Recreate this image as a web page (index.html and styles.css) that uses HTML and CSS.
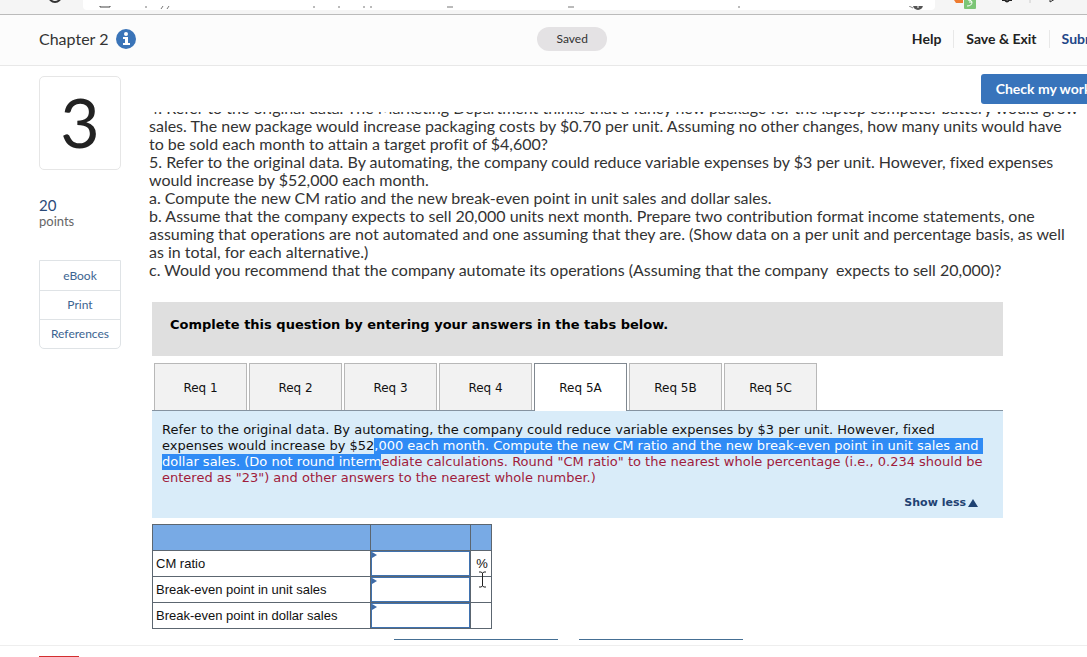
FILE: index.html
```html
<!DOCTYPE html>
<html lang="en">
<head>
    <meta charset="UTF-8">
    <meta name="viewport" content="width=device-width, initial-scale=1.0">
    <title>Chapter 2</title>
    <link rel="stylesheet" href="styles.css">
</head>
<body>
<div class="page">
    <!-- Browser toolbar -->
    <div class="browser-bar">
        <svg class="reload" width="16" height="14" viewBox="0 0 16 14"><path d="M2 -4a6 6 0 0 0 12 0" fill="none" stroke="#333" stroke-width="2"/></svg>
        <div class="address">
            <svg width="852" height="10" viewBox="0 0 852 10" fill="none" stroke="#777" stroke-width="1">
                <path d="M17 0v1h10v-1" stroke="#444"/>
                <path d="M63 0v2M80 0l-2 3M86 0l-2 3M231 0v2M256 0v2M281 0v2M288 0v2M656 0v2M364 1h6M485 1h6"/>
                <path d="M826 0l4 2" stroke="#888"/><circle cx="835" cy="-1" r="5" fill="#555" stroke="none"/><path d="M835 0v2" stroke="#fff"/>
            </svg>
        </div>
        <svg class="extensions" width="152" height="14" viewBox="0 0 152 14">
            <path d="M19 0h9v3h-7z" fill="#ee7b30"/>
            <rect x="29" y="-3" width="12" height="12" rx="1" fill="#7cc576"/>
            <path d="M33 0q4 0 4 2q0 4-5 4M34 2h3" fill="none" stroke="#fff" stroke-width="1"/>
            <path d="M67 0h3q2 3 4 0h3" fill="none" stroke="#222" stroke-width="2"/>
            <path d="M95 0v3" stroke="#ccc"/>
            <path d="M115 0v2l5-3" fill="none" stroke="#333" stroke-width="1"/>
        </svg>
    </div>

    <!-- Header -->
    <header class="header">
        <div class="chapter">
            <span>Chapter 2</span>
            <svg width="20" height="20" viewBox="0 0 20 20"><circle cx="10" cy="10" r="10" fill="#3a74b8"/><circle cx="10" cy="5" r="2" fill="#fff"/><path d="M7 8h5v6h2v2H7v-2h2v-4H7z" fill="#fff"/></svg>
        </div>
        <span class="saved">Saved</span>
        <nav class="nav">
            <a href="#">Help</a>
            <a href="#">Save &amp; Exit</a>
            <a href="#" class="submit">Submit</a>
        </nav>
    </header>

    <div class="main">
        <!-- Question number and links -->
        <aside class="sidebar">
            <div class="number">3</div>
            <div class="points"><span>20</span>points</div>
            <div class="links">
                <a href="#">eBook</a>
                <a href="#">Print</a>
                <a href="#">References</a>
            </div>
        </aside>

        <div class="content">
            <div class="actions"><button class="check-btn">Check my work</button></div>

            <div class="question">
                <p>
                    4. Refer to the original data. The Marketing Department thinks that a fancy new package for the laptop computer battery would grow<br>
                    sales. The new package would increase packaging costs by $0.70 per unit. Assuming no other changes, how many units would have<br>
                    to be sold each month to attain a target profit of $4,600?<br>
                    5. Refer to the original data. By automating, the company could reduce variable expenses by $3 per unit. However, fixed expenses<br>
                    would increase by $52,000 each month.<br>
                    a. Compute the new CM ratio and the new break-even point in unit sales and dollar sales.<br>
                    b. Assume that the company expects to sell 20,000 units next month. Prepare two contribution format income statements, one<br>
                    assuming that operations are not automated and one assuming that they are. (Show data on a per unit and percentage basis, as well<br>
                    as in total, for each alternative.)<br>
                    c. Would you recommend that the company automate its operations (Assuming that the company &nbsp;expects to sell 20,000)?
                </p>
            </div>

            <div class="worksheet">
                <div class="banner">Complete this question by entering your answers in the tabs below.</div>

                <div class="tabs" role="tablist">
                    <button class="tab" role="tab">Req 1</button>
                    <button class="tab" role="tab">Req 2</button>
                    <button class="tab" role="tab">Req 3</button>
                    <button class="tab" role="tab">Req 4</button>
                    <button class="tab active" role="tab" aria-selected="true">Req 5A</button>
                    <button class="tab" role="tab">Req 5B</button>
                    <button class="tab" role="tab">Req 5C</button>
                </div>

                <div class="instructions">
                    <p>
                        Refer to the original data. By automating, the company could reduce variable expenses by $3 per unit. However, fixed<br>
                        expenses would increase by $52<mark>,000 each month. Compute the new CM ratio and the new break-even point in unit sales and&nbsp;</mark><br>
                        <mark>dollar sales. (Do not round interm</mark><span class="note">ediate calculations. Round "CM ratio" to the nearest whole percentage (i.e., 0.234 should be<br>
                        entered as "23") and other answers to the nearest whole number.)</span>
                    </p>
                    <a href="#" class="show-less">Show less<svg width="10" height="8" viewBox="0 0 10 8"><path d="M5 0l5 8H0z" fill="#1f4272"/></svg></a>
                </div>

                <table class="answers">
                    <thead>
                        <tr><th class="label-col"></th><th class="input-col"></th><th class="unit-col"></th></tr>
                    </thead>
                    <tbody>
                        <tr>
                            <td><label for="ratio">CM ratio</label></td>
                            <td class="entry"><input type="text" id="ratio"></td>
                            <td class="unit">%
                                <svg class="cursor" width="9" height="17" viewBox="0 0 9 17"><path d="M1 1h2l1.500 1l1.500-1h2M4.500 2v13M1 16h2l1.500-1l1.500 1h2" fill="none" stroke="#222"/></svg>
                            </td>
                        </tr>
                        <tr>
                            <td><label for="units">Break-even point in unit sales</label></td>
                            <td class="entry"><input type="text" id="units"></td>
                            <td class="unit"></td>
                        </tr>
                        <tr>
                            <td><label for="dollars">Break-even point in dollar sales</label></td>
                            <td class="entry"><input type="text" id="dollars"></td>
                            <td class="unit"></td>
                        </tr>
                    </tbody>
                </table>

                <!-- Top edges of the previous / next tab buttons -->
                <div class="steps"><span></span><span></span></div>
            </div>
        </div>
    </div>

    <footer class="footer"><div class="logo"></div></footer>
</div>
</body>
</html>
```
FILE: styles.css
```css
* {
    margin: 0;
    padding: 0;
    box-sizing: border-box;
}

body {
    height: 100vh;
    overflow: hidden;
    background: #fff;
    color: #333;
    font-family: Lato, sans-serif;
    font-variant-ligatures: none;
}
a {
    text-decoration: none;
}
/* The page is a little wider than the window */
.page {
    display: flex;
    flex-direction: column;
    width: 104%;
    height: 100vh;
    overflow: hidden;
}
/* Browser toolbar */
.browser-bar {
    display: flex;
    flex: none;
    height: 15px;
    padding-left: 47px;
    background: #f5f5f5;
    border-bottom: 1px solid #bbb;
    overflow: hidden;
}
.reload {
    margin-right: 20px;
}
.address {
    flex: none;
    width: 852px;
    height: 10px;
    background: #fff;
    border-radius: 0 0 4px 4px;
}
.extensions {
    flex: none;
}
/* Header */
.header {
    display: grid;
    grid-template-columns: 1fr auto 1fr;
    align-items: center;
    flex: none;
    height: 51px;
    padding: 0 25px 3px 39px;
    background: #fcfcfc;
    border-bottom: 1px solid #e8e8e8;
}
.chapter {
    display: flex;
    align-items: center;
    gap: 8px;
    font-size: 16px;
}
.saved {
    width: 70px;
    height: 24px;
    border-radius: 12px;
    background: #e4e2e4;
    font-size: 12px;
    line-height: 23px;
    text-align: center;
}
.nav {
    display: flex;
    justify-content: flex-end;
}
.nav a {
    padding: 0 12px;
    border-left: 1px solid #e8e8e8;
    color: #222;
    font-size: 14px;
    font-weight: bold;
    line-height: 18px;
}
.nav a:first-child {
    border-left: none;
}
.nav .submit {
    padding-right: 0;
    color: #1f4788;
}
/* Main area */
.main {
    display: flex;
    flex: 1;
    min-height: 0;
    gap: 28px;
    padding: 8px 25px 0 39px;
    overflow: hidden;
}
.sidebar {
    flex: none;
    width: 82px;
    padding-top: 2px;
}
.number {
    height: 94px;
    border: 1px solid #e6e6e6;
    border-radius: 5px;
    color: #222;
    font-size: 68px;
    line-height: 90px;
    text-align: center;
}
.points {
    margin-top: 27px;
    color: #666;
    font-size: 13px;
    line-height: 16px;
}
.points span {
    display: block;
    color: #2c4a78;
    font-size: 15px;
}
.links {
    margin-top: 31px;
    border: 1px solid #dfe3e6;
    border-radius: 0 0 5px 5px;
}
.links a {
    display: block;
    border-bottom: 1px solid #dfe3e6;
    color: #3c6491;
    font-size: 12px;
    line-height: 28px;
    text-align: center;
}
.links a:first-child {
    line-height: 29px;
}
.links a:last-child {
    border-bottom: none;
}
.content {
    flex: 1;
    min-width: 0;
}
.actions {
    display: flex;
    justify-content: flex-end;
}
.check-btn {
    height: 30px;
    padding: 0 14px 0 15px;
    border: none;
    border-radius: 3px;
    background: #3874bb;
    color: #fff;
    font-family: inherit;
    font-size: 14px;
    font-weight: bold;
    line-height: 28px;
}
/* Question text, scrolled part of a line */
.question {
    margin-top: 8px;
    overflow: hidden;
}
.question p {
    margin-top: -13px;
    font-size: 16px;
    line-height: 18px;
    white-space: nowrap;
}
.worksheet {
    width: 851px;
    margin: 23px 0 0 3px;
    color: #111;
    font-family: Verdana, "DejaVu Sans", sans-serif;
    font-size: 13px;
}
.banner {
    height: 54px;
    padding: 14px 18px;
    background: #dfdfdf;
    color: #000;
    font-weight: bold;
    line-height: 17px;
}
/* Tabs */
.tabs {
    display: flex;
    gap: 2px;
    margin-top: 7px;
    padding-left: 2px;
    border-bottom: 1px solid #8593a0;
}
.tab {
    width: 93px;
    height: 47px;
    padding-top: 1px;
    border: 1px solid #b8b8b8;
    border-bottom: none;
    background: #f2f2f2;
    color: #111;
    font-family: inherit;
    font-size: 12px;
}
.tab.active {
    height: 48px;
    margin-bottom: -1px;
    padding-top: 0;
    border-color: #808890;
    background: #fff;
}
.instructions {
    height: 107px;
    padding: 11px 10px;
    background: #d9ecf9;
}
.instructions p {
    line-height: 16px;
    white-space: nowrap;
}
.instructions mark {
    display: inline-block;
    background: #2f8bf5;
    color: #fff;
}
.note {
    color: #a01c3c;
}
.show-less {
    display: flex;
    justify-content: flex-end;
    align-items: center;
    gap: 2px;
    margin-top: 9px;
    padding-right: 15px;
    color: #1f4272;
    font-size: 11px;
    font-weight: bold;
    line-height: 16px;
}
/* Answer table */
.answers {
    margin-top: 6px;
    border-collapse: collapse;
    font-family: "Liberation Sans", Arial, sans-serif;
    font-size: 13px;
}
.answers th,
.answers td {
    height: 26px;
    border: 1px solid #5c6670;
}
.answers td {
    padding: 0 3px;
}
.answers th {
    background: #78aae5;
}
.label-col {
    width: 218px;
}
.input-col {
    width: 100px;
}
.unit-col {
    width: 21px;
}
.answers .entry {
    position: relative;
    padding: 0;
}
.entry::after {
    content: "";
    position: absolute;
    top: 1px;
    left: 1px;
    border: 3px solid transparent;
    border-left: 5px solid #3f6ba6;
    border-right: none;
}
.entry input {
    display: block;
    width: 100%;
    height: 25px;
    border: 1px solid #3f72b0;
    font-size: 13px;
}
.answers .unit {
    position: relative;
    padding: 0 2px 0 4px;
    text-align: center;
}
.cursor {
    position: absolute;
    top: 20px;
    left: 7px;
}
.steps {
    display: flex;
    gap: 21px;
    margin: 10px 0 0 242px;
}
.steps span {
    width: 164px;
    border-top: 1px solid #456f94;
}
/* Footer */
.footer {
    flex: none;
    height: 12px;
    padding: 10px 0 0 39px;
    border-top: 1px solid #eee;
}
.logo {
    width: 40px;
    height: 8px;
    background: #d32f2f;
}
```
